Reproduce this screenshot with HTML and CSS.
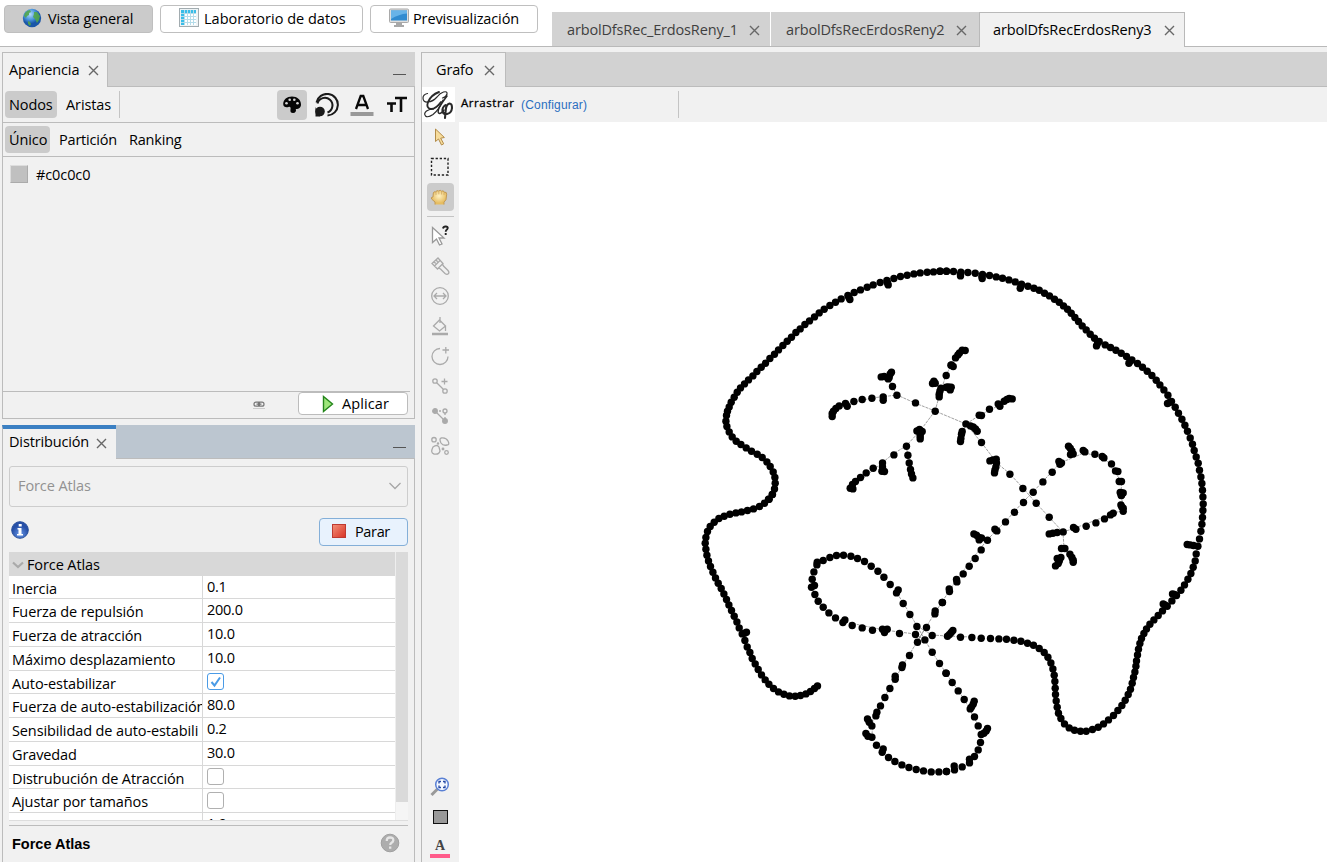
FILE: index.html
```html
<!DOCTYPE html>
<html lang="es">
<head>
<meta charset="utf-8">
<title>Gephi</title>
<link rel="stylesheet" href="styles.css">
</head>
<body>
<header class="topbar">
  <div class="perspectives">
    <div class="persp on"><svg width="20" height="20" viewBox="0 0 20 20"><defs><radialGradient id="gl" cx=".4" cy=".3"><stop offset="0" stop-color="#b5dcfa"/><stop offset=".6" stop-color="#4a95dc"/><stop offset="1" stop-color="#1a57a8"/></radialGradient></defs><circle cx="10" cy="10" r="9.2" fill="url(#gl)"/><path d="M3 5q2-3 5-3l1 2-2 1 0 2-2 1-1 2-2-2zM12 4l3 0 3 4-1 4-2 3-2-4-2-2 1-3zM6 13l2 1 1 2-1 2-2-2z" fill="#52a64a" opacity=".9"/></svg><span>Vista general</span></div>
    <div class="persp data"><svg width="20" height="20" viewBox="0 0 20 20"><rect x=".5" y=".5" width="19" height="18" fill="#eef4f6" stroke="#a2acb0"/><rect x="2" y="2" width="15" height="15" fill="#fff"/><path d="M2 2h15v3H2zM2 2h3v15H2z" fill="#38bde8"/><path d="M2 5.500h15M2 8.500h15M2 11.500h15M2 14.500h15M5.500 2v15M8.500 2v15M11.500 2v15M14.500 2v15" stroke="#b4dcea"/></svg><span>Laboratorio de datos</span></div>
    <div class="persp prev"><svg width="20" height="20" viewBox="0 0 20 20"><rect x=".5" y="1" width="19" height="13.500" rx="1" fill="#dedede" stroke="#a9a9a9"/><rect x="2" y="2.500" width="16" height="10" fill="#318bd0"/><path d="M2 2.500h16v3Q10 6 2 11z" fill="#68b3e8"/><path d="M7 15h6v2h2v2H5v-2h2z" fill="#a8a8a8"/></svg><span>Previsualización</span></div>
  </div>
  <div class="docs">
    <div class="doc d1"><span>arbolDfsRec_ErdosReny_1</span><svg class="x" viewBox="0 0 11 11"><path d="M1 1l9 9M10 1l-9 9"/></svg></div>
    <div class="doc d2"><span>arbolDfsRecErdosReny2</span><svg class="x" viewBox="0 0 11 11"><path d="M1 1l9 9M10 1l-9 9"/></svg></div>
    <div class="doc d3"><span>arbolDfsRecErdosReny3</span><svg class="x" viewBox="0 0 11 11"><path d="M1 1l9 9M10 1l-9 9"/></svg></div>
  </div>
</header>
<main class="work">
  <aside class="left">
    <section class="panel look">
      <div class="head"><div class="tab"><span class="w-ap">Apariencia</span><svg class="x" viewBox="0 0 11 11"><path d="M1 1l9 9M10 1l-9 9"/></svg></div><i class="min"></i></div>
      <div class="bar kinds">
        <span class="chip sel">Nodos</span><span class="chip second">Aristas</span><i class="sep"></i>
        <div class="modes">
          <span class="mode sel"><svg width="20" height="20" viewBox="0 0 20 20"><path d="M10 1.500C5 1.500 1.200 4.500 1.200 9c0 2.800 2.500 3.800 5.300 3 1.700-.5 2.500.5 2 2.500-.5 2.500.5 3.500 2.500 3.500 2.500 0 3.500-2 2.800-4 3.700 0 5.200-2 5.200-4.500 0-5-4-8-9-8z" fill="#050505"/><g fill="#d5d5d5"><circle cx="4.500" cy="8.300" r="1.300"/><circle cx="7.700" cy="4.800" r="1.300"/><circle cx="12.300" cy="4.800" r="1.300"/><circle cx="15.500" cy="8.300" r="1.300"/></g></svg></span>
          <span class="mode"><svg width="24" height="24" viewBox="0 0 24 24"><g fill="none" stroke="#1a1a1a"><path d="M1.500 9.500A10.800 10.800 0 1 1 12.500 22.500" stroke-width="2"/><path d="M2.500 10.500A7.600 7.600 0 1 1 12.500 19.500" stroke-width="2"/></g><circle cx="5" cy="18.500" r="4.800" fill="#1a1a1a"/><path d="M.5 14v9.500H5z" fill="#1a1a1a"/></svg></span>
          <span class="mode"><svg width="24" height="24" viewBox="0 0 24 24"><path d="M6 16l4.700-13h2.600L18 16M8 12h8" fill="none" stroke="#080808" stroke-width="2.300"/><path d="M.5 19h23v4H.5z" fill="#999"/></svg></span>
          <span class="mode"><svg width="22" height="22" viewBox="0 0 22 22"><path d="M9 4h12M15 4v14M1 9.500h9M5.500 9.500V18" fill="none" stroke="#0a0a0a" stroke-width="2.600"/></svg></span>
        </div>
      </div>
      <div class="bar methods"><span class="chip sel">Único</span><span class="chip part">Partición</span><span class="chip rank">Ranking</span></div>
      <div class="color"><i></i><span>#c0c0c0</span></div>
      <div class="applyrow"><svg width="12" height="8" viewBox="0 0 12 8"><path d="M5.500 1.200H3Q1 1.200 1 3.200t2 2h2.500zM6.500 1.200H9q2 0 2 2t-2 2H6.500zM3.500 3.200h5" fill="none" stroke="#777" stroke-width="1.200"/><path d="M0 7.500h12" stroke="#ccc"/></svg><div class="btn apply"><svg width="12" height="18" viewBox="0 0 12 18"><path d="M1.500 1.500v15L10.500 9z" fill="#9ee67b" stroke="#24851b" stroke-width="1.400"/></svg><span>Aplicar</span></div></div>
    </section>
    <section class="panel layout">
      <div class="head active"><div class="tab"><span class="w-di">Distribución</span><svg class="x" viewBox="0 0 11 11"><path d="M1 1l9 9M10 1l-9 9"/></svg></div><i class="min"></i></div>
      <div class="body">
        <div class="combo"><span>Force Atlas</span><svg width="12" height="8" viewBox="0 0 12 8"><path d="M.5 1L6 6.500 11.500 1" fill="none" stroke="#a6a6a6" stroke-width="1.300"/></svg></div>
        <div class="run"><svg width="18" height="18" viewBox="0 0 18 18"><defs><radialGradient id="inf" cy=".75"><stop offset="0" stop-color="#6796e6"/><stop offset="1" stop-color="#2750a8"/></radialGradient></defs><circle cx="9" cy="9" r="8.300" fill="url(#inf)" stroke="#274f9c"/><path d="M7.700 3h3v2.500h-3zM6.500 7h4v6h1.500v1.500h-6V13h1.500V8.500h-1z" fill="#fff"/></svg><div class="btn stop"><svg width="14" height="14" viewBox="0 0 14 14"><defs><linearGradient id="rd" x2="1" y2="1"><stop offset="0" stop-color="#f3927b"/><stop offset="1" stop-color="#d83225"/></linearGradient></defs><rect x=".5" y=".5" width="13" height="13" fill="url(#rd)" stroke="#bd3a32"/></svg><span>Parar</span></div></div>
        <div class="sheet">
          <div class="props">
            <div class="cat"><svg width="12" height="8" viewBox="0 0 12 8"><path d="M1 1.500L6 6l5-4.500" fill="none" stroke="#aaa" stroke-width="2.200"/></svg><span>Force Atlas</span></div>
            <div class="row short"><span>Inercia</span><b>0.1</b></div>
            <div class="row"><span>Fuerza de repulsión</span><b>200.0</b></div>
            <div class="row"><span>Fuerza de atracción</span><b>10.0</b></div>
            <div class="row"><span>Máximo desplazamiento</span><b>10.0</b></div>
            <div class="row short"><span>Auto-estabilizar</span><b><i class="check on"><svg width="16" height="16" viewBox="0 0 16 16"><path d="M3.500 8l3 3.500 5.500-8" fill="none" stroke="#4a9be6" stroke-width="2"/></svg></i></b></div>
            <div class="row"><span>Fuerza de auto-estabilización</span><b>80.0</b></div>
            <div class="row"><span>Sensibilidad de auto-estabili</span><b>0.2</b></div>
            <div class="row"><span>Gravedad</span><b>30.0</b></div>
            <div class="row short"><span>Distrubución de Atracción</span><b><i class="check"></i></b></div>
            <div class="row"><span>Ajustar por tamaños</span><b><i class="check"></i></b></div>
            <div class="row last"><span></span><b>1.0</b></div>
          </div>
          <div class="scroll"><i></i></div>
        </div>
        <div class="help"><span>Force Atlas</span><svg width="20" height="20" viewBox="0 0 20 20"><circle cx="10" cy="10" r="8.800" fill="#adadad" stroke="#a0a0a0"/><path d="M6.800 8Q6.500 4.500 10 4.500q3.500 0 3.300 2.800-.1 1.500-2 2.600-1 .7-1 2M10.200 13.500v2.300" fill="none" stroke="#e6e6e6" stroke-width="2.300"/></svg></div>
      </div>
    </section>
  </aside>
  <section class="graph">
    <div class="head"><div class="tab"><span class="w-gr">Grafo</span><svg class="x" viewBox="0 0 11 11"><path d="M1 1l9 9M10 1l-9 9"/></svg></div></div>
    <div class="tools-top">
      <div class="logo"><svg width="33" height="35" viewBox="0 0 33 35"><g fill="none" stroke="#2a2a2a" stroke-linecap="round"><path d="M5.500 6.500Q1 7.500 1 11q0 4.500 5 4 5-.5 9-5 3-4 6.500-5 4-1 3.500 2-.7 3-4.500 4" stroke-width="1.200"/><path d="M17 5Q9 8 6 15q-2 6 2.500 7 5 .5 10.500-7" stroke-width="1.900"/><path d="M21 13q-4 10-10 14.500-5 3.500-7.500 1.500-2-2.500 1-5 3-2 7-2" stroke-width="1.200"/><path d="M25 9q-6 8-8 12-2 5 .5 5.500 2 0 4.500-3.500" stroke-width="1.500"/><path d="M23.500 18q-3.500 2.500-3 6 .6 3.500 4.500 3 4.500-1 5-6 0-4.500-2.500-4.500-3 .5-3.700 6L23 31" stroke-width="2.100"/></g></svg></div>
      <span class="drag">Arrastrar</span><span class="conf">(Configurar)</span><i class="sep"></i>
    </div>
    <div class="stage">
      <nav class="tools">
        <span class="tool t-arrow"><svg width="20" height="22" viewBox="0 0 20 22"><path d="M5.500 3v12.500l3-2.500 3 6 2.200-1.200-3-5.600 3.700-.7z" fill="#f6dc9c" stroke="#b38c48"/></svg></span>
        <span class="tool"><svg width="20" height="20" viewBox="0 0 20 20"><rect x="1.500" y="1.500" width="16.500" height="16.500" fill="none" stroke="#222" stroke-width="1.400" stroke-dasharray="2.300 1.800"/></svg></span>
        <span class="tool sel"><svg width="19" height="19" viewBox="0 0 19 19"><defs><radialGradient id="hd" cy=".4"><stop offset="0" stop-color="#fff2c4"/><stop offset="1" stop-color="#e6bd62"/></radialGradient></defs><path d="M5 16.500v-2.500L1.500 11q-.8-2 1.500-2l.3-4Q4 3 5.800 4 6.500 1.800 8.500 3q2-1.500 3 .2 2.200-1.200 2.700 1 2.600-.5 2.500 2l-.7 5.500-2 2.500v2.300" fill="url(#hd)" stroke="#bd9450" stroke-width=".9"/><path d="M6 4v3M8.800 3.300v3M11.500 3.500v3M14 4.500v2.500" stroke="#cfa662" stroke-width=".7"/></svg></span>
        <i class="rule"></i>
        <span class="tool t-query"><svg width="22" height="22" viewBox="0 0 22 22"><path d="M3.500 2.500v15l4-3.500 3 6 2.500-1-3-6h5z" fill="#fff" stroke="#999" stroke-width="1.300"/><path d="M14 3.500Q14.500 1.200 17 1.500q2.800.5 1.200 2.700-1.500 1-1.500 2.500M16.700 8v2" fill="none" stroke="#222" stroke-width="1.900"/></svg></span>
        <span class="tool"><svg class="g" viewBox="0 0 20 20"><path d="M2 7.500L8 2l5 5.500L7.500 13zM4.500 10L10 4.500M8.500 12l2 1 4.500 4.500q2 1.500 3.300.3t-.3-3.300L13.500 10l-1-2M4 5.700l1.700 1.800M6 4l1.700 1.800"/></svg></span>
        <span class="tool"><svg class="g" viewBox="0 0 20 20"><circle cx="10" cy="10" r="8.300"/><path d="M4 10h12M7 7l-3 3 3 3M13 7l3 3-3 3"/></svg></span>
        <span class="tool"><svg class="g" viewBox="0 0 20 20"><path d="M3.500 10l6-6 6 6-6 5zM10 1v6M15.500 10v5"/><path d="M2 18h16" stroke-width="2.500"/></svg></span>
        <span class="tool"><svg class="g" viewBox="0 0 20 20"><path d="M10 2.500a8 8 0 1 0 8 8M12.500 4H19M15.800 1v6.500"/></svg></span>
        <span class="tool"><svg class="g" viewBox="0 0 20 20"><circle cx="5" cy="5" r="2.200"/><circle cx="15" cy="15" r="2.200"/><path d="M6.700 6.700l6.600 6.600M11.500 5.500h6M14.500 2.500v6"/></svg></span>
        <span class="tool"><svg class="g" viewBox="0 0 20 20"><path d="M5 5l10 10"/><path d="M5 5h10v10" stroke-dasharray="2 2"/><g fill="#aaa"><circle cx="5" cy="5" r="2.300"/><circle cx="15" cy="15" r="2.300"/></g><circle cx="15" cy="5" r="2" fill="#f1f1f1"/></svg></span>
        <span class="tool"><svg class="g" viewBox="0 0 20 20"><circle cx="4" cy="3.700" r="2.200"/><path d="M11 2q5-1 7 3t-1 4q-4 1-6-2-2-4 0-5zM3 11q4-3 6 0l1 4q-1 4-6 3-4-1-1-7z"/><circle cx="16.500" cy="16.500" r="1.800"/><circle cx="8" cy="7.500" r=".6"/><circle cx="13" cy="13" r=".8"/></svg></span>
        <div class="bottom-tools">
          <span class="tool"><svg width="20" height="20" viewBox="0 0 20 20"><path d="M1.500 18l6-6" stroke="#999" stroke-width="3"/><circle cx="12" cy="7.500" r="6.300" fill="#f4f8ff" stroke="#5a80d4" stroke-width="1.500"/><path d="M9 6.500V4.500h2M13 4.500h2v2M15 8.500v2h-2M11 10.500H9v-2" fill="none" stroke="#2448a4" stroke-width="1.300"/></svg></span>
          <span class="tool"><i class="swatch"></i></span>
          <span class="tool letter"><b>A</b><i></i></span>
        </div>
      </nav>
      <svg class="canvas" viewBox="459 122 868 740"><g id="edges"></g><g id="nodes"></g></svg>
    </div>
  </section>
</main>
<script src="graph.js"></script>
</body>
</html>
```
FILE: styles.css
```css
* { box-sizing: border-box; }
body { margin: 0; width: 1327px; height: 862px; overflow: hidden; display: flex; flex-direction: column; background: #f1f1f1; color: #000; font: 14.5px/20px "Open Sans", "Noto Sans", sans-serif; }
i { font-style: normal; }
svg { display: block; flex: none; }
span { white-space: nowrap; }
.x { width: 11px; height: 11px; fill: none; stroke: #686868; stroke-width: 1.400; }
.topbar { height: 47px; flex: none; display: flex; background: #fff; border-bottom: 1px solid #b9b9b9; }
.perspectives { width: 552px; flex: none; display: flex; gap: 7px; padding: 5px 0 0 4px; }
.persp { height: 28px; width: 149px; display: flex; align-items: center; padding-left: 17px; gap: 6px; border: 1px solid #bfbfbf; border-radius: 4px; background: #fff; }
.persp svg { margin-top: -3px; }
.persp.on { background: #cbcbcb; letter-spacing: -.13px; }
.persp.data { width: 203px; padding-left: 18px; gap: 5px; }
.persp.prev { width: 168px; padding-left: 18px; gap: 4px; letter-spacing: -.12px; }
.docs { display: flex; padding-top: 12px; height: 47px; }
.doc { display: flex; align-items: center; justify-content: space-between; height: 34px; padding: 2px 10px 0 15px; background: #d2d2d2; color: #3f3f3f; }
.doc span { margin-top: -1px; letter-spacing: -.15px; }
.d1 { width: 218px; }
.d2 { width: 208px; margin-left: 1px; padding-right: 12px; }
.d3 { width: 206px; height: 35px; padding: 1px 9px 0 13px; background: #f1f1f1; color: #000; border: 1px solid #b9b9b9; border-bottom: 0; }
.work { flex: 1; min-height: 0; display: flex; padding-top: 5px; }
.left { width: 415px; flex: none; padding-left: 2px; display: flex; flex-direction: column; gap: 6px; }
.panel { display: flex; flex-direction: column; border: 1px solid #bcbcbc; }
.look { height: 367px; flex: none; }
.layout { flex: 1; min-height: 0; border-bottom: 0; }
.head { height: 35px; flex: none; margin: -1px -1px 0; display: flex; justify-content: space-between; align-items: stretch; background: #d2d2d2; border-bottom: 1px solid #bcbcbc; }
.tab { height: 35px; display: flex; align-items: center; gap: 9px; padding: 0 9px 0 6px; background: #f1f1f1; border: 1px solid #bcbcbc; border-bottom: 0; }
.look .tab { width: 106px; letter-spacing: -.1px; }
.min { align-self: flex-end; width: 13px; height: 1px; margin: 0 9px 11px; background: #555; }
.active { background: #bcc6d0; height: 34px; }
.active .min { margin-bottom: 10px; }
.active .tab { width: 114px; height: 34px; padding-bottom: 4px; border-top: 4px solid #3b80c3; border-right: 0; gap: 7px; letter-spacing: -.15px; }
.active .x { margin-top: 3px; }
.bar { display: flex; align-items: center; border-bottom: 1px solid #bcbcbc; flex: none; padding-left: 2px; letter-spacing: -.1px; }
.kinds { height: 36px; }
.methods { height: 34px; }
.chip { height: 27px; line-height: 27px; padding: 0 4px; border-radius: 4px; }
.chip.sel { background: #cbcbcb; }
.kinds .chip.sel { width: 52px; }
.methods .chip.sel { width: 45px; }
.second { width: 54px; margin-left: 5px; }
.part { width: 66px; margin-left: 5px; letter-spacing: -.2px; }
.rank { margin-left: 4px; letter-spacing: -.2px; }
.sep { width: 1px; height: 27px; background: #c4c4c4; margin-left: 3px; }
.modes { margin-left: auto; padding-right: 2px; display: flex; gap: 5px; }
.mode { width: 30px; height: 30px; display: flex; align-items: center; justify-content: center; border-radius: 4px; }
.mode svg { margin-left: -1px; }
.mode.sel { background: #cbcbcb; }
.color { flex: 1; padding: 8px 7px; display: flex; gap: 8px; line-height: 20px; letter-spacing: -.1px; }
.color i { width: 18px; height: 18px; background: #c0c0c0; border: 1px solid #ababab; border-top-color: #ddd; border-left-color: #ddd; }
.applyrow { height: 27px; margin-right: 4px; flex: none; display: flex; justify-content: flex-end; border-top: 1px solid #bcbcbc; padding-right: 2px; }
.applyrow > svg { margin: 9px 33px 0 0; }
.btn { display: flex; align-items: center; border: 1px solid #bcbcbc; border-radius: 4px; background: #fff; }
.apply { width: 110px; height: 23px; padding-left: 23px; gap: 8px; letter-spacing: .1px; }
.body { display: flex; flex-direction: column; padding: 6px 6px 0; }
.combo { height: 41px; margin-top: 1px; display: flex; align-items: center; justify-content: space-between; padding: 0 6px 2px 8px; color: #929292; letter-spacing: -.1px; border: 1px solid #cdcdcd; border-radius: 3px; }
.run { display: flex; justify-content: space-between; padding: 11px 0 6px 2px; height: 45px; }
.run > svg { margin-top: 3px; }
.stop { width: 89px; height: 28px; background: #e8f2fd; border-color: #84afd8; padding-left: 13px; gap: 9px; letter-spacing: -.35px; }
.stop svg { margin: -2px 0 0 -1px; }
.sheet { height: 269px; width: 399px; display: flex; overflow: hidden; border-bottom: 1px solid #ddd; letter-spacing: -.11px; }
.props { width: 386px; overflow: hidden; background: #fff; }
.cat { height: 24px; background: #d8d8d8; display: flex; align-items: center; padding: 2px 0 0 3px; gap: 3px; }
.row { height: 24px; display: flex; border-bottom: 1px solid #d8d8d8; }
.row.short { height: 23px; }
.row.last { border-bottom: 0; }
.row span { width: 194px; flex: none; overflow: hidden; padding: 2px 0 0 3px; border-right: 1px solid #d8d8d8; line-height: 21px; }
.row b { font-weight: 400; padding-left: 4px; line-height: 22px; letter-spacing: -.25px; }
.check { display: block; width: 17px; height: 17px; margin-top: 3px; border: 1px solid #b0b0b0; border-radius: 3px; background: #fff; }
.check.on { border-color: #4a9be6; }
.row.short .check { margin-top: 2px; }
.scroll { width: 13px; background: #f5f5f5; border-left: 1px solid #eee; }
.scroll i { display: block; height: 250px; background: #dadada; }
.help { height: 40px; margin-top: 4px; display: flex; justify-content: space-between; border-top: 1px solid #bcbcbc; padding: 8px 8px 0 3px; font: bold 14.5px/20px "Liberation Sans", sans-serif; }
.help svg { margin-top: -1px; }
.graph { margin-left: 6px; flex: 1; min-width: 0; display: flex; flex-direction: column; border-left: 1px solid #b9b9b9; }
.graph > .head { margin: 0; }
.graph .tab { width: 84px; padding-left: 14px; gap: 11px; border-left: 0; letter-spacing: -.15px; }
.tools-top { height: 35px; flex: none; display: flex; }
.logo { width: 33px; background: #fff; }
.drag { font: 11.5px/14px "Open Sans", sans-serif; letter-spacing: .55px; width: 60px; margin: 9px 0 0 6px; -webkit-text-stroke: .3px #000; }
.conf { font: 12px/14px "Liberation Sans", sans-serif; letter-spacing: .18px; color: #2a6ec0; margin-top: 11px; width: 157px; }
.tools-top .sep { margin: 4px 0 0 0; }
.stage { flex: 1; min-height: 0; display: flex; }
.tools { width: 37px; padding-right: 1px; display: flex; flex-direction: column; align-items: center; }
.tool { width: 27px; height: 28px; flex: none; margin-bottom: 2px; display: flex; align-items: center; justify-content: center; border-radius: 4px; }
.tool svg { margin-left: -1px; }
.tool.sel { background: #cbcbcb; margin-bottom: 5px; }
.t-arrow { margin-top: 1px; }
.rule { width: 27px; height: 1px; background: #c4c4c4; margin-bottom: 5px; }
.t-query { padding-left: 1px; }
.tools .g { width: 20px; height: 20px; fill: none; stroke: #aaa; stroke-width: 1.300; }
.bottom-tools { margin-top: auto; padding-bottom: 0; }
.bottom-tools .tool { position: relative; top: 1px; }
.swatch { width: 15px; height: 14px; border: 1px solid #111; background: #999; }
.letter { flex-direction: column; }
.letter b { font: bold 14px/14px "Liberation Serif", serif; color: #444; padding-top: 2px; }
.letter i { width: 20px; height: 4px; margin-top: 1px; background: #ff5b8a; }
.canvas { width: 868px; height: 740px; background: #fff; }
#nodes circle { fill: #000; }
#edges polyline { fill: none; stroke: #777; stroke-width: .7; stroke-dasharray: 3 1; }
```
FILE: graph.js
```js
// Node clusters: origin of each region, then x,y pairs in thirds of a pixel.
const clusters = [
  [690, 260, `769,33 749,33 730,35 711,36 690,38 671,41 651,45 631,49 611,55 590,61 570,67 549,74 531,81 511,89 492,97 473,106 453,116 436,126 419,136 402,147 387,158 373,170 358,182 344,193 330,206 317,217 304,231 291,243 278,256 265,269 253,282 239,295 226,309 213,321 200,334 188,347 175,359 163,371 151,383 141,396 132,411 123,426 117,440 112,453 109,466 107,483 110,499 117,515 126,530 138,543 152,553 168,563 184,573 201,582 216,592 230,605 240,619 249,635 254,652 255,669 253,686 246,703 235,717
   479,118 476,112 594,74 592,68
   735,453 676,428 620,405 607,379 597,352 594,356 573,350 582,349 604,336 600,341 579,410 579,420 545,414 516,418 491,424 466,430 471,438 447,437 437,445 430,453 426,460 426,469 782,315 768,346 752,384 749,393 747,402 747,410 731,363 727,370 735,369 770,382
   680,512 688,508 696,514 690,522 690,536 690,529 649,558 611,584 577,608 577,620 575,633 583,634 549,624 528,638 511,652 496,664 487,673 480,684 488,686 653,585 657,608 661,628 664,641 668,653`],
  [940, 260, `782,650 778,630 774,609 768,590 762,571 757,552 750,533 742,513 734,495 725,477 715,459 705,441 694,424 683,405 671,389 659,374 648,360 635,346 621,333 607,321 592,310 575,299 559,289 543,279 527,270 511,262 495,254 477,244 463,234 450,222 438,209 426,197 415,184 404,172 393,159 382,147 370,137 357,126 343,117 328,107 313,99 297,90 281,84 263,78 244,72 225,65 206,59 187,54 168,50 148,46 127,43 105,39 83,37 62,36 40,34 19,33 0,33
   61,47 61,42 126,55 125,49 240,84 242,78 469,257 472,250 566,309 570,303 682,430 688,427
   75,271 66,270 58,278 53,284 46,293 34,314 39,319 18,381 33,381 30,389 25,380
   216,416 207,415 200,418 192,423 174,431 179,438 148,447 117,465 124,466 77,491 66,514 64,522 62,535 61,544 91,497 99,500 106,506 111,513 124,547 149,602 158,599 168,597 169,608 167,620 163,638 164,630 209,642 248,685 279,696 308,665 336,636 356,604 364,608 359,612 385,558 390,564 395,572 399,581 391,583 429,571 434,575 464,582 486,589 491,593 514,611 526,632 533,634 537,664 544,664 540,697 549,698 544,705`],
  [690, 490, `247,13 237,27 223,39 208,49 190,56 172,61 154,65 137,68 119,72 102,78 86,85 72,96 60,109 52,124 47,142 45,159 47,177 50,195 55,212 61,229 68,246 76,263 84,279 93,295 101,311 109,328 116,344 124,361 132,378 140,395 147,413 156,431 164,451 171,470 179,487 186,505 195,521 204,538 214,554 225,569 236,582 250,595 265,605 281,612 298,617 315,618 331,616 347,611 361,604 373,595 382,587 169,426 163,429
   757,337 735,362 734,371 709,412 726,436 676,433 680,409 704,449 682,456 726,486 748,520 768,549 658,496 637,524 635,532 615,558 615,567 599,595 584,622 571,647 560,666 557,677 532,686 537,696 545,707 527,730 533,738 545,741 559,765 579,776 576,786 595,802 614,814 635,824 656,832 678,838 700,842 723,845 746,845 769,844
   659,373 639,340 624,299 619,308 600,283 581,261 563,243 543,228 523,214 502,205 482,198 460,195 439,196 419,202 399,211 381,216 380,224 371,245 366,267 373,286 364,291 374,313 384,333 399,351 416,368 436,383 464,389 458,397 486,406 516,413 547,420 577,417 583,427 591,417 628,430`],
  [940, 480, `22,468 28,463 33,457 38,451 61,471 95,472 123,474 151,475 176,476 199,477 221,480 242,483 262,489 280,495 297,505 312,517 323,531 332,548 338,566 342,585 344,604 345,624 346,643 348,662 351,681 355,699 362,715 373,731 387,743 403,750 421,753 438,753 457,748 474,741 490,731 505,719 520,706 533,691 545,676 555,660 564,643 571,627 576,609 580,592 584,575 587,558 589,542 592,524 595,507 599,490 604,475 611,460 619,446 629,432 641,419 654,406 667,392 681,378 695,362 709,346 722,330 733,314 743,297 752,280 759,261 765,242 768,221 773,198 778,176 782,153 785,132 787,112 788,91 789,71 788,50 787,30 785,10
   741,193 750,194 760,196 697,341 703,343 669,371 674,374
   544,38 543,46 250,67 288,69 223,96 196,125 164,147 170,152 142,180 124,173 117,179 101,161 109,165 116,172 123,209 105,235 87,258 69,281 49,298 50,305 27,326 28,334 6,367 327,111 369,155 351,157 338,159 327,161 400,142 407,147 438,138 467,128 493,116 511,104 519,99 542,74 549,84 549,93 545,80 364,205 374,205 389,222 395,232 399,240 399,246 362,232 351,235 354,250 346,257 357,243
   17,579 36,607 54,632 72,658 102,663 99,672 94,680 90,686 103,710 114,737 142,745 138,752 131,759 123,763 121,787 114,809 103,829 88,837 88,848 66,860 42,857 43,869 19,874`]
];

const edges = [
  '831,412 845,404 872,398 897,395 915,403 935,411 966,424 981,442 997,463 1010,474 1023,488 1036,503 1049,517 1063,532 1064,548',
  '897,395 892,386 889,377', '935,411 920,431 906,446 893,454 882,463 850,489', '906,446 913,478',
  '935,411 939,397 946,375 953,362', '966,424 980,415 1012,399', '966,424 961,440',
  '1123,510 1122,500 1121,481 1104,457 1084,453 1060,463 1033,492 1023,502 1005,522 987,540 957,579 942,602 926,627 917,642 909,655 889,689 873,718 872,735',
  '1063,532 1075,528 1123,510', '1049,534 1063,532',
  '897,593 910,614 917,626 925,640 932,652 946,673 964,699 978,725', '845,622 884,630 915,634', '925,640 915,634', '926,627 917,642', '917,626 932,635', '932,635 947,636 972,637'
];

const NS = 'http://www.w3.org/2000/svg';
const add = (parent, tag, attrs) => {
  const el = document.createElementNS(NS, tag);
  for (const key in attrs) el.setAttribute(key, attrs[key]);
  document.getElementById(parent).appendChild(el);
};

edges.forEach(points => add('edges', 'polyline', { points }));
clusters.forEach(([ox, oy, list]) => list.trim().split(/\s+/).forEach(pair => {
  const [x, y] = pair.split(',').map(Number);
  add('nodes', 'circle', { cx: (ox + x / 3 + .2).toFixed(1), cy: (oy + y / 3 + .2).toFixed(1), r: 3.7 });
}));
```
